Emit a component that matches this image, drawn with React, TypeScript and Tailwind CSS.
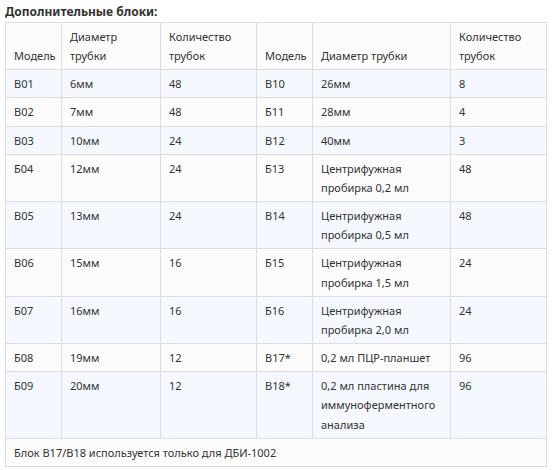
import React from "react";

type Row = [string, string, string, string, string, string];

const rows: Row[] = [
  ["B01", "6мм", "48", "B10", "26мм", "8"],
  ["B02", "7мм", "48", "Б11", "28мм", "4"],
  ["B03", "10мм", "24", "B12", "40мм", "3"],
  ["Б04", "12мм", "24", "Б13", "Центрифужная пробирка 0,2 мл", "48"],
  ["B05", "13мм", "24", "B14", "Центрифужная пробирка 0,5 мл", "48"],
  ["B06", "15мм", "16", "Б15", "Центрифужная пробирка 1,5 мл", "24"],
  ["Б07", "16мм", "16", "Б16", "Центрифужная пробирка 2,0 мл", "24"],
  ["Б08", "19мм", "12", "B17*", "0,2 мл ПЦР-планшет", "96"],
  ["Б09", "20мм", "12", "B18*", "0,2 мл пластина для иммуноферментного анализа", "96"],
];

const cell = "border border-[#dddddd] px-2 py-1 align-top text-left font-normal";

export default function App() {
  return (
    <div className="min-h-screen bg-white px-[5px] pt-[3px] text-[#333333] font-['Noto_Sans','Open_Sans',sans-serif] text-[11px] leading-[19.15px]">
      <h3 className="text-[12px] font-bold leading-[17px] mb-[2px]">Дополнительные блоки:</h3>
      <table className="border-collapse table-fixed w-[541px]">
        <colgroup>
          <col className="w-[56px]" />
          <col className="w-[99px]" />
          <col className="w-[96px]" />
          <col className="w-[56px]" />
          <col className="w-[138px]" />
          <col className="w-[96px]" />
        </colgroup>
        <thead>
          <tr className="bg-[#fcfcfc]">
            <th className={cell + " !align-bottom"}>Модель</th>
            <th className={cell}>Диаметр трубки</th>
            <th className={cell}>Количество трубок</th>
            <th className={cell + " !align-bottom"}>Модель</th>
            <th className={cell + " !align-bottom"}>Диаметр трубки</th>
            <th className={cell}>Количество трубок</th>
          </tr>
        </thead>
        <tbody>
          {rows.map((r, i) => (
            <tr key={r[0]} className={i % 2 === 0 ? "bg-[#f5f9ff]" : "bg-[#fcfcfc]"}>
              {r.map((c, j) => (
                <td key={j} className={cell}>
                  {c}
                </td>
              ))}
            </tr>
          ))}
          <tr className="bg-[#fcfcfc]">
            <td colSpan={6} className={cell}>
              Блок B17/B18 используется только для ДБИ-1002
            </td>
          </tr>
        </tbody>
      </table>
    </div>
  );
}
